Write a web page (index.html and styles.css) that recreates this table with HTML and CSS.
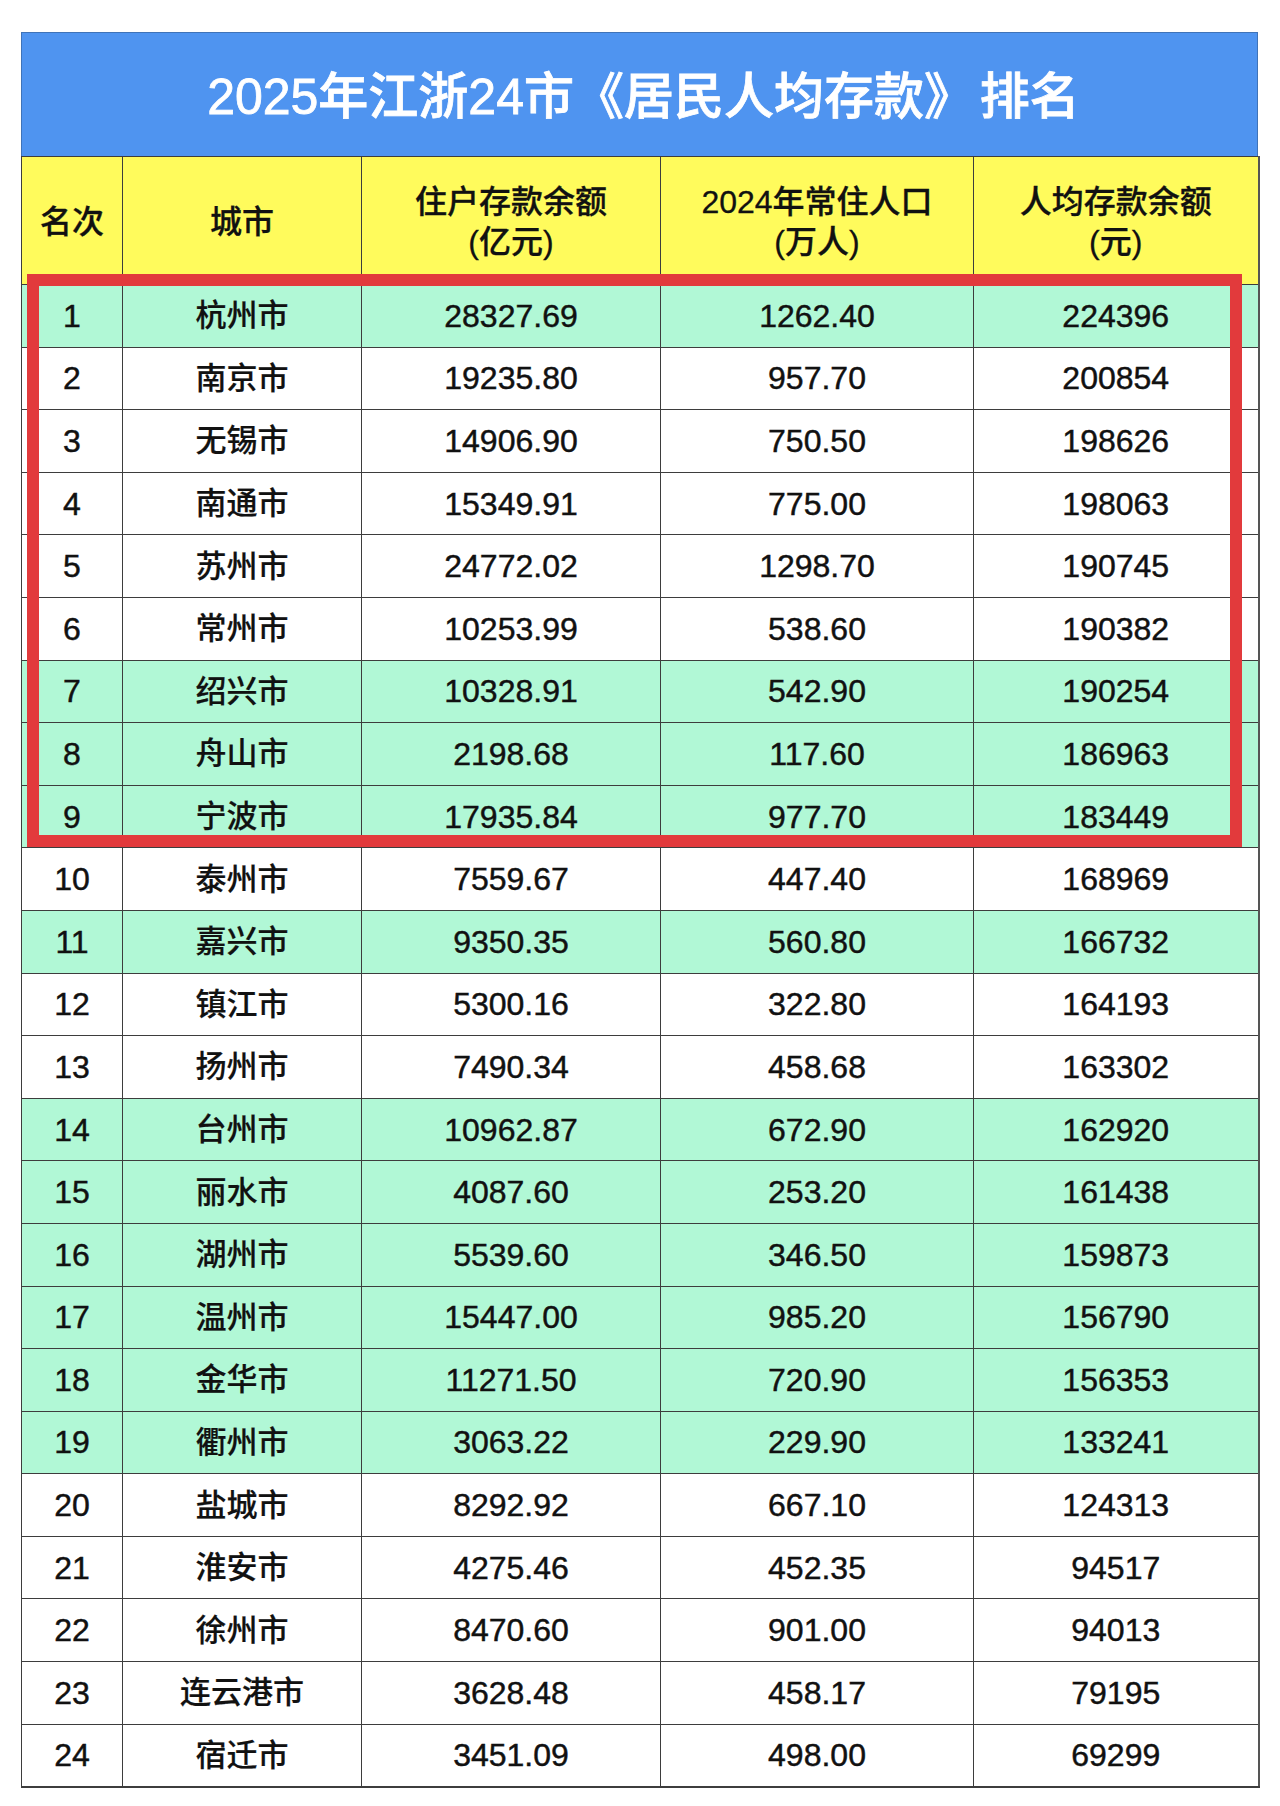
FILE: index.html
```html
<!DOCTYPE html>
<html lang="zh-CN">
<head>
<meta charset="utf-8">
<title>2025年江浙24市《居民人均存款》排名</title>
<link rel="stylesheet" href="styles.css">
</head>
<body>
<div class="sheet">
  <div class="title">2025年江浙24市《居民人均存款》 排名</div>
  <table class="grid">
    <colgroup>
      <col class="c-rank"><col class="c-city"><col class="c-dep"><col class="c-pop"><col class="c-per">
    </colgroup>
    <thead>
      <tr>
        <th>名次</th>
        <th>城市</th>
        <th>住户存款余额<br>(亿元)</th>
        <th>2024年常住人口<br>(万人)</th>
        <th>人均存款余额<br>(元)</th>
      </tr>
    </thead>
    <tbody>
      <tr class="g"><td>1</td><td class="city">杭州市</td><td>28327.69</td><td>1262.40</td><td>224396</td></tr>
      <tr><td>2</td><td class="city">南京市</td><td>19235.80</td><td>957.70</td><td>200854</td></tr>
      <tr><td>3</td><td class="city">无锡市</td><td>14906.90</td><td>750.50</td><td>198626</td></tr>
      <tr><td>4</td><td class="city">南通市</td><td>15349.91</td><td>775.00</td><td>198063</td></tr>
      <tr><td>5</td><td class="city">苏州市</td><td>24772.02</td><td>1298.70</td><td>190745</td></tr>
      <tr><td>6</td><td class="city">常州市</td><td>10253.99</td><td>538.60</td><td>190382</td></tr>
      <tr class="g"><td>7</td><td class="city">绍兴市</td><td>10328.91</td><td>542.90</td><td>190254</td></tr>
      <tr class="g"><td>8</td><td class="city">舟山市</td><td>2198.68</td><td>117.60</td><td>186963</td></tr>
      <tr class="g"><td>9</td><td class="city">宁波市</td><td>17935.84</td><td>977.70</td><td>183449</td></tr>
      <tr><td>10</td><td class="city">泰州市</td><td>7559.67</td><td>447.40</td><td>168969</td></tr>
      <tr class="g"><td>11</td><td class="city">嘉兴市</td><td>9350.35</td><td>560.80</td><td>166732</td></tr>
      <tr><td>12</td><td class="city">镇江市</td><td>5300.16</td><td>322.80</td><td>164193</td></tr>
      <tr><td>13</td><td class="city">扬州市</td><td>7490.34</td><td>458.68</td><td>163302</td></tr>
      <tr class="g"><td>14</td><td class="city">台州市</td><td>10962.87</td><td>672.90</td><td>162920</td></tr>
      <tr class="g"><td>15</td><td class="city">丽水市</td><td>4087.60</td><td>253.20</td><td>161438</td></tr>
      <tr class="g"><td>16</td><td class="city">湖州市</td><td>5539.60</td><td>346.50</td><td>159873</td></tr>
      <tr class="g"><td>17</td><td class="city">温州市</td><td>15447.00</td><td>985.20</td><td>156790</td></tr>
      <tr class="g"><td>18</td><td class="city">金华市</td><td>11271.50</td><td>720.90</td><td>156353</td></tr>
      <tr class="g"><td>19</td><td class="city">衢州市</td><td>3063.22</td><td>229.90</td><td>133241</td></tr>
      <tr><td>20</td><td class="city">盐城市</td><td>8292.92</td><td>667.10</td><td>124313</td></tr>
      <tr><td>21</td><td class="city">淮安市</td><td>4275.46</td><td>452.35</td><td>94517</td></tr>
      <tr><td>22</td><td class="city">徐州市</td><td>8470.60</td><td>901.00</td><td>94013</td></tr>
      <tr><td>23</td><td class="city">连云港市</td><td>3628.48</td><td>458.17</td><td>79195</td></tr>
      <tr class="last"><td>24</td><td class="city">宿迁市</td><td>3451.09</td><td>498.00</td><td>69299</td></tr>
    </tbody>
  </table>
  <div class="highlight"></div>
</div>
</body>
</html>
```
FILE: styles.css
```css
html, body {
  margin: 0;
  padding: 0;
  background: #ffffff;
}

body {
  font-family: "Liberation Sans", "Noto Sans CJK SC", sans-serif;
  color: #111111;
}

.sheet {
  position: relative;
  width: 1237px;
  margin: 32px 0 0 21px;
}

.title {
  box-sizing: border-box;
  height: 124px;
  background: #4f94f0;
  border: 1px solid #3f73b8;
  border-bottom: none;
  color: #ffffff;
  font-family: "Liberation Sans", "Noto Sans CJK SC", sans-serif;
  font-weight: 500;
  font-size: 50px;
  line-height: 1;
  word-spacing: -8px;
  -webkit-text-stroke: 0.8px #ffffff;
  display: flex;
  align-items: center;
  justify-content: center;
  padding-left: 8px;
  padding-top: 4px;
}

.grid {
  width: 1237px;
  border-collapse: collapse;
  table-layout: fixed;
}

.c-rank { width: 101px; }
.c-city { width: 239px; }
.c-dep { width: 299px; }
.c-pop { width: 313px; }
.c-per { width: 285px; }

.grid th,
.grid td {
  border: 1px solid #3d3d3d;
  padding: 0;
  text-align: center;
  vertical-align: middle;
}

.grid th {
  height: 125px;
  background: #fffb5c;
  font-size: 32px;
  line-height: 40px;
  font-weight: 500;
  color: #111111;
  padding-top: 2px;
  -webkit-text-stroke: 0.3px #111111;
}

.grid td {
  height: 61.6px;
  font-size: 32px;
  line-height: 1;
  background: #ffffff;
  -webkit-text-stroke: 0.45px #111111;
}

.grid td.city {
  font-size: 31px;
  font-weight: 500;
  -webkit-text-stroke: 0.2px #111111;
}

.grid tr.g td {
  background: #b1f8d6;
}

.grid tr.last td {
  border-bottom: 2px solid #3d3d3d;
}

.grid td:last-child,
.grid th:last-child {
  border-right: 2px solid #555555;
}

.highlight {
  position: absolute;
  left: 6px;
  top: 242px;
  width: 1215px;
  height: 573px;
  box-sizing: border-box;
  border: 12px solid #e23a3c;
  pointer-events: none;
}
```
